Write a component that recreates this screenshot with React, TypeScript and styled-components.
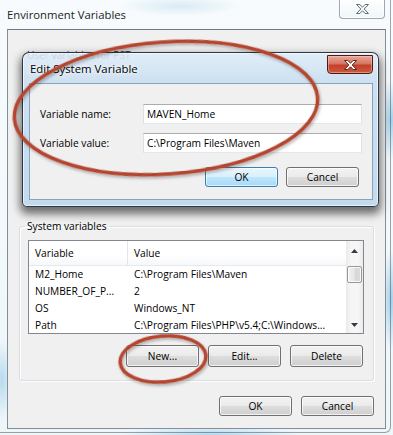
import React from "react";
import styled, { createGlobalStyle, css } from "styled-components";

const GlobalStyle = createGlobalStyle`
  html, body { margin: 0; padding: 0; }
  body {
    width: 393px;
    height: 435px;
    overflow: hidden;
    font-family: "Open Sans", "Noto Sans", "DejaVu Sans", sans-serif;
    font-size: 10.2px;
    color: #000;
  }
`;

const Desktop = styled.div`
  position: relative;
  width: 393px;
  height: 435px;
  overflow: hidden;
  background:
    radial-gradient(ellipse 70px 12px at 320px 52px, rgba(170, 210, 232, 0.75), transparent),
    radial-gradient(ellipse 60px 10px at 180px 6px, rgba(205, 228, 240, 0.7), transparent),
    radial-gradient(ellipse 14px 40px at 391px 120px, rgba(150, 200, 228, 0.85), transparent),
    radial-gradient(ellipse 10px 50px at 391px 300px, rgba(150, 200, 228, 0.85), transparent),
    radial-gradient(ellipse 12px 40px at 2px 380px, rgba(160, 205, 230, 0.7), transparent),
    radial-gradient(ellipse 90px 8px at 210px 434px, rgba(170, 210, 235, 0.8), transparent),
    linear-gradient(180deg, #f7fbfd, #eef6fa);
`;

const Window = styled.div`
  display: flex;
  flex-direction: column;
  width: 391px;
  height: 433px;
  box-sizing: border-box;
  border-right: 1px solid rgba(40, 60, 80, 0.45);
  border-bottom: 1px solid rgba(40, 60, 80, 0.45);
  border-radius: 0 0 6px 0;
`;

const TitleBar = styled.div`
  display: flex;
  justify-content: space-between;
  align-items: flex-start;
  height: 29px;
  flex: none;
`;

const WindowTitle = styled.div`
  margin: 7px 0 0 7px;
  line-height: 16px;
  font-size: 11.3px;
  color: #1c1c1c;
  text-shadow: 0 0 8px rgba(255, 255, 255, 1);
`;

const CloseButton = styled.div<{ $active?: boolean }>`
  display: flex;
  align-items: center;
  justify-content: center;
  box-sizing: border-box;
  width: 46px;
  border-radius: 0 0 4px 4px;
  ${(p) =>
    p.$active
      ? css`
          height: 19px;
          margin: 2px 0 0 0;
          border: 1px solid #4b1a12;
          background: linear-gradient(180deg, #e9a899 0%, #d87562 45%, #c2402a 55%, #cf5a40 100%);
          box-shadow: inset 0 0 0 1px rgba(255, 210, 200, 0.45);
        `
      : css`
          height: 20px;
          margin: -1px 5px 0 0;
          border: 1px solid rgba(80, 100, 120, 0.55);
          background: linear-gradient(180deg, rgba(255, 255, 255, 0.7), rgba(235, 243, 248, 0.6));
          box-shadow: inset 0 0 0 1px rgba(255, 255, 255, 0.7);
        `}
`;

const CloseGlyph = ({ active }: { active?: boolean }) => (
  <svg width="13" height="10" viewBox="0 0 13 10">
    <path
      d="M0.5 0.5 H3.8 L6.5 3.2 L9.2 0.5 H12.5 L8.2 5 L12.5 9.5 H9.2 L6.5 6.8 L3.8 9.5 H0.5 L4.8 5 Z"
      fill={active ? "#ffffff" : "#f4f6f8"}
      stroke={active ? "#5a2a22" : "#5f6d7a"}
      strokeWidth="1"
      strokeLinejoin="round"
    />
  </svg>
);

const Client = styled.div`
  display: flex;
  flex-direction: column;
  box-sizing: border-box;
  width: 379px;
  height: 400px;
  margin-left: 7px;
  border: 1px solid #838e99;
  border-top-color: #6d7883;
  background: #f0f0f0;
`;

const UserArea = styled.div`
  height: 188px;
  flex: none;
  padding: 17px 0 0 19px;
  box-sizing: border-box;
  line-height: 16px;
  color: #333;
`;

const GroupBox = styled.fieldset`
  margin: 0 11px;
  padding: 6px 9px 13px 8px;
  border: 1px solid #d5dfe5;
  border-radius: 3px;
  box-shadow: inset 1px 1px 0 #fff, 1px 1px 0 #fff;
  min-width: 0;
`;

const Legend = styled.legend`
  margin-left: -3px;
  padding: 0 2px;
  line-height: 16px;
  color: #000;
`;

const ListView = styled.div`
  display: grid;
  grid-template-columns: 1fr 17px;
  height: 94px;
  box-sizing: border-box;
  border: 1px solid #828790;
  background: #fff;
  overflow: hidden;
`;

const ListBody = styled.div`
  display: flex;
  flex-direction: column;
  min-width: 0;
`;

const HeaderRow = styled.div`
  display: grid;
  grid-template-columns: 99px 1fr;
  height: 25px;
  flex: none;
  background: linear-gradient(180deg, #ffffff 0%, #ffffff 55%, #f7f8fa 100%);
  border-bottom: 1px solid #e5e8ec;
  box-sizing: border-box;
`;

const HeaderCell = styled.div<{ $divider?: boolean }>`
  display: flex;
  align-items: center;
  padding-left: 6px;
  color: #000;
  ${(p) => p.$divider && css`border-right: 1px solid #e3e6ea;`}
`;

const Row = styled.div`
  display: grid;
  grid-template-columns: 99px 1fr;
  height: 17px;
  flex: none;
  align-items: center;
`;

const Cell = styled.div`
  padding-left: 6px;
  white-space: nowrap;
  overflow: hidden;
  line-height: 17px;
`;

const ScrollBar = styled.div`
  display: flex;
  flex-direction: column;
  background: linear-gradient(90deg, #eaeaea, #f6f6f6 30%, #f6f6f6 70%, #ebebeb);
`;

const ScrollArrow = styled.div`
  display: flex;
  align-items: center;
  justify-content: center;
  height: 19px;
  flex: none;
`;

const ScrollTrack = styled.div`
  flex: 1;
  padding: 6px 1px 0 1px;
`;

const Thumb = styled.div`
  height: 17px;
  box-sizing: border-box;
  border: 1px solid #979797;
  border-radius: 2px;
  background: linear-gradient(90deg, #f3f3f3, #e4e4e4 50%, #d6d6d6 51%, #dcdcdc);
  box-shadow: inset 0 0 0 1px rgba(255, 255, 255, 0.8);
`;

const Arrow = ({ down }: { down?: boolean }) => (
  <svg width="7" height="4" viewBox="0 0 7 4">
    <path d={down ? "M0 0 H7 L3.5 4 Z" : "M0 4 H7 L3.5 0 Z"} fill="#3b3b3b" />
  </svg>
);

const ButtonRow = styled.div<{ $gap?: number; $top?: number; $right?: number }>`
  display: flex;
  justify-content: flex-end;
  gap: ${(p) => p.$gap ?? 9}px;
  margin-top: ${(p) => p.$top ?? 0}px;
  margin-right: ${(p) => p.$right ?? 0}px;
`;

const Button = styled.button<{ $default?: boolean; $h?: number }>`
  width: 73px;
  height: ${(p) => p.$h ?? 21}px;
  box-sizing: border-box;
  padding: 0;
  font: inherit;
  color: #000;
  border: 1px solid #707070;
  border-radius: 3px;
  background: linear-gradient(180deg, #f2f2f2 0%, #ebebeb 48%, #dddddd 52%, #cfcfcf 100%);
  box-shadow: inset 0 0 0 1px rgba(255, 255, 255, 0.75);
  ${(p) =>
    p.$default &&
    css`
      border-color: #3c7fb1;
      background: linear-gradient(180deg, #eaf6fd 0%, #d9f0fc 48%, #bee6fd 52%, #a7d9f5 100%);
      box-shadow: inset 0 0 0 1px rgba(255, 255, 255, 0.6);
    `}
`;

const Dialog = styled.div`
  position: absolute;
  left: 22px;
  top: 52px;
  width: 357px;
  height: 155px;
  box-sizing: border-box;
  display: flex;
  flex-direction: column;
  padding: 0 5px 6px 6px;
  border: 1px solid rgba(25, 38, 52, 0.9);
  border-radius: 7px 7px 5px 5px;
  background: linear-gradient(
    180deg,
    rgba(222, 236, 248, 0.88) 0px,
    rgba(200, 222, 241, 0.9) 30px,
    rgba(192, 216, 238, 0.95) 100%
  );
  box-shadow: inset 0 0 0 1px rgba(255, 255, 255, 0.6), 0 5px 9px 2px rgba(0, 0, 0, 0.55);
`;

const DialogTitleBar = styled.div`
  display: flex;
  justify-content: space-between;
  align-items: flex-start;
  height: 30px;
  flex: none;
`;

const DialogTitle = styled.div`
  margin: 8px 0 0 1px;
  line-height: 16px;
  font-size: 11.4px;
  color: #000;
  text-shadow: 0 0 7px rgba(255, 255, 255, 1), 0 0 3px rgba(255, 255, 255, 1);
`;

const DialogClient = styled.div`
  flex: 1;
  display: flex;
  flex-direction: column;
  padding: 20px 10px 0 10px;
  border: 1px solid #8aa2bb;
  background: #f0f0f0;
`;

const FieldRow = styled.div`
  display: grid;
  grid-template-columns: 103px 1fr;
  align-items: center;
  height: 20px;
  margin-bottom: 9px;
`;

const FieldLabel = styled.label`
  line-height: 16px;
`;

const TextInput = styled.input`
  height: 20px;
  box-sizing: border-box;
  padding: 0 3px;
  font: inherit;
  color: #000;
  border: 1px solid;
  border-color: #abadb3 #e2e3ea #e3e9ef #dbdfe6;
  background: #fff;
  outline: none;
`;

const Annotations = styled.svg`
  position: absolute;
  left: 0;
  top: 0;
  pointer-events: none;
`;

const rows: [string, string][] = [
  ["M2_Home", "C:\\Program Files\\Maven"],
  ["NUMBER_OF_P...", "2"],
  ["OS", "Windows_NT"],
  ["Path", "C:\\Program Files\\PHP\\v5.4;C:\\Windows..."],
];

export default function App() {
  return (
    <>
      <GlobalStyle />
      <Desktop>
        <Window>
          <TitleBar>
            <WindowTitle>Environment Variables</WindowTitle>
            <CloseButton>
              <CloseGlyph />
            </CloseButton>
          </TitleBar>
          <Client>
            <UserArea>User variables for PST</UserArea>
            <GroupBox>
              <Legend>System variables</Legend>
              <ListView>
                <ListBody>
                  <HeaderRow>
                    <HeaderCell $divider>Variable</HeaderCell>
                    <HeaderCell>Value</HeaderCell>
                  </HeaderRow>
                  {rows.map(([k, v]) => (
                    <Row key={k}>
                      <Cell>{k}</Cell>
                      <Cell>{v}</Cell>
                    </Row>
                  ))}
                </ListBody>
                <ScrollBar>
                  <ScrollArrow>
                    <Arrow />
                  </ScrollArrow>
                  <ScrollTrack>
                    <Thumb />
                  </ScrollTrack>
                  <ScrollArrow>
                    <Arrow down />
                  </ScrollArrow>
                </ScrollBar>
              </ListView>
              <ButtonRow $top={11} $right={1} $gap={9}>
                <Button $h={22}>New...</Button>
                <Button $h={22}>Edit...</Button>
                <Button $h={22}>Delete</Button>
              </ButtonRow>
            </GroupBox>
            <ButtonRow $top={15} $right={11} $gap={9}>
              <Button $h={20}>OK</Button>
              <Button $h={20}>Cancel</Button>
            </ButtonRow>
          </Client>
        </Window>

        <Dialog>
          <DialogTitleBar>
            <DialogTitle>Edit System Variable</DialogTitle>
            <CloseButton $active>
              <CloseGlyph active />
            </CloseButton>
          </DialogTitleBar>
          <DialogClient>
            <FieldRow>
              <FieldLabel>Variable name:</FieldLabel>
              <TextInput defaultValue="MAVEN_Home" />
            </FieldRow>
            <FieldRow>
              <FieldLabel>Variable value:</FieldLabel>
              <TextInput defaultValue={"C:\\Program Files\\Maven"} />
            </FieldRow>
            <ButtonRow $top={5} $right={3} $gap={8}>
              <Button $default $h={20}>OK</Button>
              <Button $h={20}>Cancel</Button>
            </ButtonRow>
          </DialogClient>
        </Dialog>

        <Annotations width="393" height="435" viewBox="0 0 393 435">
          <defs>
            <filter id="inkShadow" x="-10%" y="-10%" width="120%" height="130%">
              <feDropShadow dx="1" dy="2" stdDeviation="1.5" floodColor="#000" floodOpacity="0.3" />
            </filter>
          </defs>
          <ellipse
            cx="166"
            cy="108"
            rx="152"
            ry="66"
            transform="rotate(-4 166 108)"
            fill="none"
            stroke="#b4452f"
            strokeWidth="3.5"
            filter="url(#inkShadow)"
          />
          <ellipse
            cx="163"
            cy="359"
            rx="43"
            ry="23"
            transform="rotate(-5 163 359)"
            fill="none"
            stroke="#b4452f"
            strokeWidth="3.5"
            filter="url(#inkShadow)"
          />
        </Annotations>
      </Desktop>
    </>
  );
}
